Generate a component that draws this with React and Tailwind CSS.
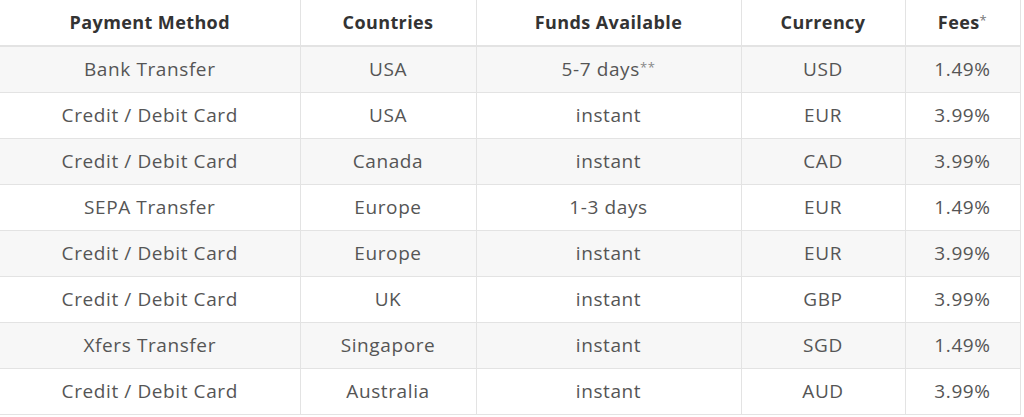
import React from 'react';

const rows = [
  ['Bank Transfer', 'USA', '5-7 days**', 'USD', '1.49%'],
  ['Credit / Debit Card', 'USA', 'instant', 'EUR', '3.99%'],
  ['Credit / Debit Card', 'Canada', 'instant', 'CAD', '3.99%'],
  ['SEPA Transfer', 'Europe', '1-3 days', 'EUR', '1.49%'],
  ['Credit / Debit Card', 'Europe', 'instant', 'EUR', '3.99%'],
  ['Credit / Debit Card', 'UK', 'instant', 'GBP', '3.99%'],
  ['Xfers Transfer', 'Singapore', 'instant', 'SGD', '1.49%'],
  ['Credit / Debit Card', 'Australia', 'instant', 'AUD', '3.99%'],
];

const FundsCell = ({ value }) => {
  if (value.endsWith('**')) {
    return (
      <>
        {value.slice(0, -2)}
        <span className="text-[13px] text-[#888] align-[4px]">**</span>
      </>
    );
  }
  return value;
};

const App = () => {
  return (
    <div className="w-[1024px] h-[417px] bg-white font-['Open_Sans',sans-serif]">
      <table className="w-[1020px] border-collapse table-fixed text-center">
        <colgroup>
          <col className="w-[300px]" />
          <col className="w-[176px]" />
          <col className="w-[265px]" />
          <col className="w-[164px]" />
          <col className="w-[115px]" />
        </colgroup>
        <thead>
          <tr className="h-[46px] border-b-2 border-[#e3e3e3]">
            <th className="border-r border-[#e3e3e3] text-[18px] tracking-[0.4px] font-bold text-[#333]">Payment Method</th>
            <th className="border-r border-[#e3e3e3] text-[18px] tracking-[0.4px] font-bold text-[#333]">Countries</th>
            <th className="border-r border-[#e3e3e3] text-[18px] tracking-[0.4px] font-bold text-[#333]">Funds Available</th>
            <th className="border-r border-[#e3e3e3] text-[18px] tracking-[0.4px] font-bold text-[#333]">Currency</th>
            <th className="border-r border-[#e3e3e3] text-[18px] tracking-[0.4px] font-bold text-[#333]">
              Fees<span className="text-[13px] font-normal text-[#777] align-[4px]">*</span>
            </th>
          </tr>
        </thead>
        <tbody>
          {rows.map((r, i) => (
            <tr
              key={i}
              className={`h-[46px] border-b border-[#e3e3e3] ${i % 2 === 0 ? 'bg-[#f7f7f7]' : 'bg-white'}`}
            >
              {r.map((c, j) => (
                <td key={j} className="border-r border-[#e3e3e3] text-[19px] tracking-[0.6px] text-[#555] p-0">
                  {j === 2 ? <FundsCell value={c} /> : c}
                </td>
              ))}
            </tr>
          ))}
        </tbody>
      </table>
    </div>
  );
};

export default App;
